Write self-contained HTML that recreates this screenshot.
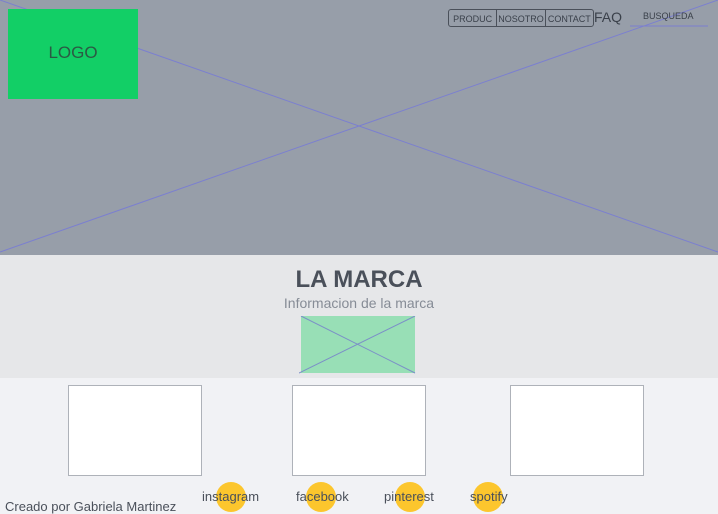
<!DOCTYPE html>
<html><head><meta charset="utf-8"><style>
body{margin:0;width:718px;height:513px;overflow:hidden;font-family:"Liberation Sans",sans-serif;background:#f1f2f5;position:relative}
.a{position:absolute}
.box{position:absolute;background:#fff;border:1px solid #aeb2b9}
.c{position:absolute;width:30px;height:30px;border-radius:50%;background:#fcc62d}
.l{position:absolute;font-size:13px;color:#4a505a}
</style></head><body>
<div class="a" style="left:0;top:0;width:718px;height:255px;background:#979ea9"></div>
<svg class="a" style="left:0;top:0" width="718" height="255"><line x1="0" y1="0" x2="718" y2="252" stroke="#7b7fd0" stroke-width="1"/><line x1="0" y1="252" x2="718" y2="0" stroke="#7b7fd0" stroke-width="1"/><line x1="630" y1="26" x2="708" y2="26" stroke="#7b7fd0"/></svg>
<div class="a" style="left:8px;top:6px;width:130px;height:90px;background:#12cf66;color:#2b5a44;font-size:17px;line-height:88px;text-align:center;top:9px">LOGO</div>
<div class="a" style="left:448px;top:9px;width:144px;height:16px;border:1px solid #4a505a;border-radius:3px;display:flex;font-size:9px;color:#3a404a;line-height:18px">
<span style="width:48px;text-align:center;border-right:1px solid #4a505a">PRODUC</span><span style="width:48px;text-align:center;border-right:1px solid #4a505a">NOSOTRO</span><span style="width:48px;text-align:center">CONTACT</span></div>
<div class="a" style="left:594px;top:9px;font-size:14px;color:#3a404a">FAQ</div>
<div class="a" style="left:643px;top:11px;font-size:9px;color:#3a404a">BUSQUEDA</div>
<div class="a" style="left:0;top:255px;width:718px;height:123px;background:#e6e7e9"></div>
<div class="a" style="left:0;top:266px;width:718px;text-align:center;font-size:24px;font-weight:bold;color:#4a505a">LA MARCA</div>
<div class="a" style="left:0;top:295px;width:718px;text-align:center;font-size:14px;color:#868c96">Informacion de la marca</div>
<div class="a" style="left:301px;top:316px;width:114px;height:57px;background:#98dfb6"></div>
<svg class="a" style="left:299px;top:316px" width="118" height="58"><line x1="2" y1="0" x2="116" y2="57" stroke="#7b8fc8"/><line x1="0" y1="57" x2="116" y2="0" stroke="#7b8fc8"/></svg>
<div class="box" style="left:68px;top:385px;width:132px;height:89px"></div>
<div class="box" style="left:292px;top:385px;width:132px;height:89px"></div>
<div class="box" style="left:510px;top:385px;width:132px;height:89px"></div>
<div class="c" style="left:216px;top:482px"></div>
<div class="c" style="left:306px;top:482px"></div>
<div class="c" style="left:395px;top:482px"></div>
<div class="c" style="left:473px;top:482px"></div>
<div class="l" style="left:202px;top:489px">instagram</div>
<div class="l" style="left:296px;top:489px">facebook</div>
<div class="l" style="left:384px;top:489px">pinterest</div>
<div class="l" style="left:470px;top:489px">spotify</div>
<div class="l" style="left:5px;top:499px">Creado por Gabriela Martinez</div>
</body></html>
